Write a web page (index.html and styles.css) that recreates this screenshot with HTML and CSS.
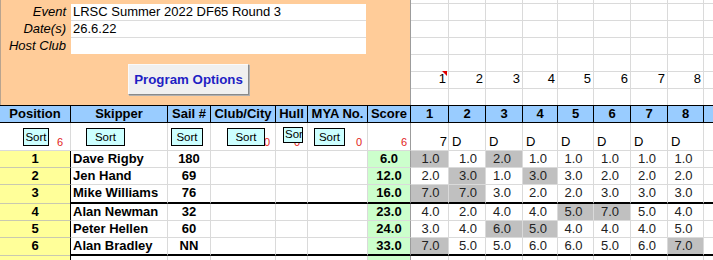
FILE: index.html
```html
<!DOCTYPE html>
<html lang="en">
<head>
  <meta charset="UTF-8" />
  <title>LRSC Summer 2022 DF65 Round 3</title>
  <link rel="stylesheet" href="styles.css">
</head>
<body>
  <div class="sheet">
    <div class="top">
      <div class="panel">
        <div class="info">
          <div class="lbl">Event</div><div class="val">LRSC Summer 2022 DF65 Round 3</div>
          <div class="lbl">Date(s)</div><div class="val">26.6.22</div>
          <div class="lbl">Host Club</div><div class="val last"></div>
        </div>
        <button type="button" class="prog">Program Options</button>
      </div>
      <div class="rtop">
        <div class="first"></div><div></div><div></div><div></div><div></div><div></div><div></div><div></div><div></div>
        <div class="first num note">1</div><div class="num">2</div><div class="num">3</div><div class="num">4</div><div class="num">5</div><div class="num">6</div><div class="num">7</div><div class="num">8</div><div></div>
        <div class="first"></div><div></div><div></div><div></div><div></div><div></div><div></div><div></div><div></div>
      </div>
    </div>

    <div class="row hdr">
      <div class="pos">Position</div><div>Skipper</div><div>Sail #</div><div>Club/City</div><div>Hull</div><div>MYA No.</div><div>Score</div>
      <div>1</div><div>2</div><div>3</div><div>4</div><div>5</div><div>6</div><div>7</div><div>8</div><div></div>
    </div>

    <div class="row srow">
      <div class="pos"><span class="sbtn b-pos">Sort</span><span class="cnt" style="padding-right:7px">6</span></div>
      <div><span class="sbtn b-skip">Sort</span></div>
      <div><span class="sbtn b-sail">Sort</span></div>
      <div><span class="cnt" style="padding-right:5px">0</span><span class="sbtn b-club">Sort</span></div>
      <div><span class="cnt" style="padding-right:7px">0</span><span class="sbtn b-hull">Sort</span></div>
      <div><span class="cnt" style="padding-right:5px">0</span><span class="sbtn b-mya">Sort</span></div>
      <div><span class="cnt" style="padding-right:3px">6</span></div>
      <div class="r1"><span class="code end">7</span></div>
      <div><span class="code">D</span></div><div><span class="code">D</span></div><div><span class="code">D</span></div><div><span class="code">D</span></div>
      <div><span class="code">D</span></div><div><span class="code">D</span></div><div><span class="code">D</span></div><div></div>
    </div>

    <div class="row">
      <div class="pos">1</div><div class="name">Dave Rigby</div><div class="sail">180</div><div></div><div></div><div></div><div class="score">6.0</div>
      <div class="r r1 d">1.0</div><div class="r r2">1.0</div><div class="r d">2.0</div><div class="r">1.0</div><div class="r">1.0</div><div class="r">1.0</div><div class="r">1.0</div><div class="r">1.0</div><div></div>
    </div>
    <div class="row">
      <div class="pos">2</div><div class="name">Jen Hand</div><div class="sail">69</div><div></div><div></div><div></div><div class="score">12.0</div>
      <div class="r r1">2.0</div><div class="r r2 d">3.0</div><div class="r">1.0</div><div class="r d">3.0</div><div class="r">3.0</div><div class="r">2.0</div><div class="r">2.0</div><div class="r">2.0</div><div></div>
    </div>
    <div class="row brk">
      <div class="pos">3</div><div class="name">Mike Williams</div><div class="sail">76</div><div></div><div></div><div></div><div class="score">16.0</div>
      <div class="r r1 d">7.0</div><div class="r r2 d">7.0</div><div class="r">3.0</div><div class="r">2.0</div><div class="r">2.0</div><div class="r">3.0</div><div class="r">3.0</div><div class="r">3.0</div><div></div>
    </div>
    <div class="row">
      <div class="pos">4</div><div class="name">Alan Newman</div><div class="sail">32</div><div></div><div></div><div></div><div class="score">23.0</div>
      <div class="r r1">4.0</div><div class="r r2">2.0</div><div class="r">4.0</div><div class="r">4.0</div><div class="r d">5.0</div><div class="r d">7.0</div><div class="r">5.0</div><div class="r">4.0</div><div></div>
    </div>
    <div class="row">
      <div class="pos">5</div><div class="name">Peter Hellen</div><div class="sail">60</div><div></div><div></div><div></div><div class="score">24.0</div>
      <div class="r r1">3.0</div><div class="r r2">4.0</div><div class="r d">6.0</div><div class="r d">5.0</div><div class="r">4.0</div><div class="r">4.0</div><div class="r">4.0</div><div class="r">5.0</div><div></div>
    </div>
    <div class="row brk last6">
      <div class="pos">6</div><div class="name">Alan Bradley</div><div class="sail">NN</div><div></div><div></div><div></div><div class="score">33.0</div>
      <div class="r r1 d">7.0</div><div class="r r2">5.0</div><div class="r">5.0</div><div class="r">6.0</div><div class="r">6.0</div><div class="r">5.0</div><div class="r">6.0</div><div class="r d">7.0</div><div></div>
    </div>
    <div class="row">
      <div class="pos"></div><div class="name"></div><div></div><div></div><div></div><div></div><div class="score"></div>
      <div class="r1"></div><div></div><div></div><div></div><div></div><div></div><div></div><div></div><div></div>
    </div>
  </div>
</body>
</html>
```

FILE: styles.css
```css
body {
  margin: 0;
  font-family: "Liberation Sans", Arial, sans-serif;
  font-size: 13px;
  color: #000;
  background: #fff;
  overflow: hidden;
}
.sheet {
  width: 713px;
  --cols: 70px 97px 43px 65px 32px 60px 43px 38px 37px 37px 35px 36px 37px 37px 36px 10px;
}

/* top block */
.top {
  display: flex;
  height: 105px;
}
.panel {
  width: 410px;
  box-sizing: border-box;
  background: #ffcc99;
  border-left: 1px solid #b9a48f;
  padding-top: 4px;
}
.info {
  display: grid;
  grid-template-columns: 70px 295px;
  grid-template-rows: 17px 17px 16px;
}
.lbl {
  font-style: italic;
  text-align: right;
  padding-right: 5px;
  line-height: 16px;
}
.val {
  background: #fff;
  border-bottom: 1px solid #dcdcdc;
  padding-left: 2px;
  line-height: 16px;
}
.val.last { border-bottom: none; }
.prog {
  display: block;
  margin: 10px 0 0 127px;
  width: 121px;
  height: 31px;
  padding: 0;
  background: #f0f0f0;
  border: 1px solid;
  border-color: #fafafa #8a8a8a #8a8a8a #fafafa;
  box-shadow: 1px 1px 0 #b0b0b0;
  font-family: inherit;
  font-size: 13.3px;
  font-weight: bold;
  color: #1f1fc4;
}
.rtop {
  flex: 1;
  display: grid;
  grid-template-columns: 38px 37px 37px 35px 36px 37px 37px 36px 10px;
  grid-template-rows: 71px 17px 17px;
  background: repeating-linear-gradient(to bottom, transparent 0 16px, #dadada 16px 17px);
  background-position: 0 -13px;
}
.rtop > div {
  border-left: 1px solid #dadada;
}
.rtop > .first { border-left-color: #9c9c9c; }
.num {
  text-align: right;
  padding-right: 2px;
  line-height: 16px;
}
.note { position: relative; }
.note::after {
  content: "";
  position: absolute;
  top: 0;
  right: 1px;
  border-top: 5px solid #e00000;
  border-left: 5px solid transparent;
}

/* table rows */
.row {
  display: grid;
  grid-template-columns: var(--cols);
  height: 17px;
}
.row > div {
  box-sizing: border-box;
  border-left: 1px solid #dadada;
  border-bottom: 1px solid #dadada;
  line-height: 16px;
  white-space: nowrap;
  overflow: hidden;
}
.row > .pos {
  border-left: none;
  background: #ffff99;
  border-bottom-color: #c9c9b0;
  font-weight: bold;
  text-align: center;
}
.row > .r1 { border-left-color: #9c9c9c; }

.hdr {
  height: 18px;
  box-sizing: border-box;
  border-top: 1px solid #000;
  border-bottom: 1px solid #000;
  background: #99ccff;
  font-weight: bold;
}
.hdr > div {
  border-bottom: none;
  border-left-color: #000;
  text-align: center;
}
.hdr > .pos { background: #99ccff; }

/* sort row */
.srow {
  height: 28px;
}
.srow > div {
  display: grid;
}
.srow > .pos {
  background: #fff;
  border-bottom-color: #dadada;
}
.sbtn {
  grid-area: 1 / 1;
  align-self: start;
  justify-self: start;
  box-sizing: border-box;
  margin-top: 5px;
  height: 18px;
  border: 1px solid #000;
  background: #ccffff;
  font-size: 11.5px;
  font-weight: normal;
  line-height: 16px;
  text-align: center;
  overflow: hidden;
}
.b-pos { margin-left: 23px; width: 26px; }
.b-skip { margin-left: 15px; width: 39px; }
.b-sail { margin-left: 3px; width: 32px; }
.b-club { margin-left: 16px; width: 38px; }
.b-hull { margin-left: 7px; margin-top: 4px; width: 20px; height: 16px; line-height: 12px; text-align: left; padding-left: 1px; }
.b-mya { margin-left: 6px; width: 31px; }
.cnt {
  grid-area: 1 / 1;
  align-self: end;
  justify-self: end;
  color: #e21b1b;
  font-size: 11px;
  font-weight: normal;
  line-height: 12px;
  padding-bottom: 2px;
}
.code {
  grid-area: 1 / 1;
  align-self: end;
  justify-self: start;
  padding-left: 3px;
  line-height: 16px;
}
.code.end {
  justify-self: end;
  padding: 0 1px 0 0;
}

/* data cells */
.name {
  font-weight: bold;
  padding-left: 2px;
}
.row > .name { border-left-color: #000; }
.sail {
  font-weight: bold;
  text-align: center;
}
.score {
  background: #ccffcc;
  font-weight: bold;
  text-align: center;
}
.r {
  text-align: center;
  color: #222;
  padding-right: 4px;
}
.r.r1, .r.r2 { padding-right: 0; padding-left: 2px; }
.r.d { background: #c0c0c0; }

.brk { height: 19px; }
.brk > div { border-bottom: 2px solid #000; }
.brk > .pos { border-bottom: 1px solid #c9c9b0; }
.last6 { height: 18px; }
.last6 > div { line-height: 16px; }
```
